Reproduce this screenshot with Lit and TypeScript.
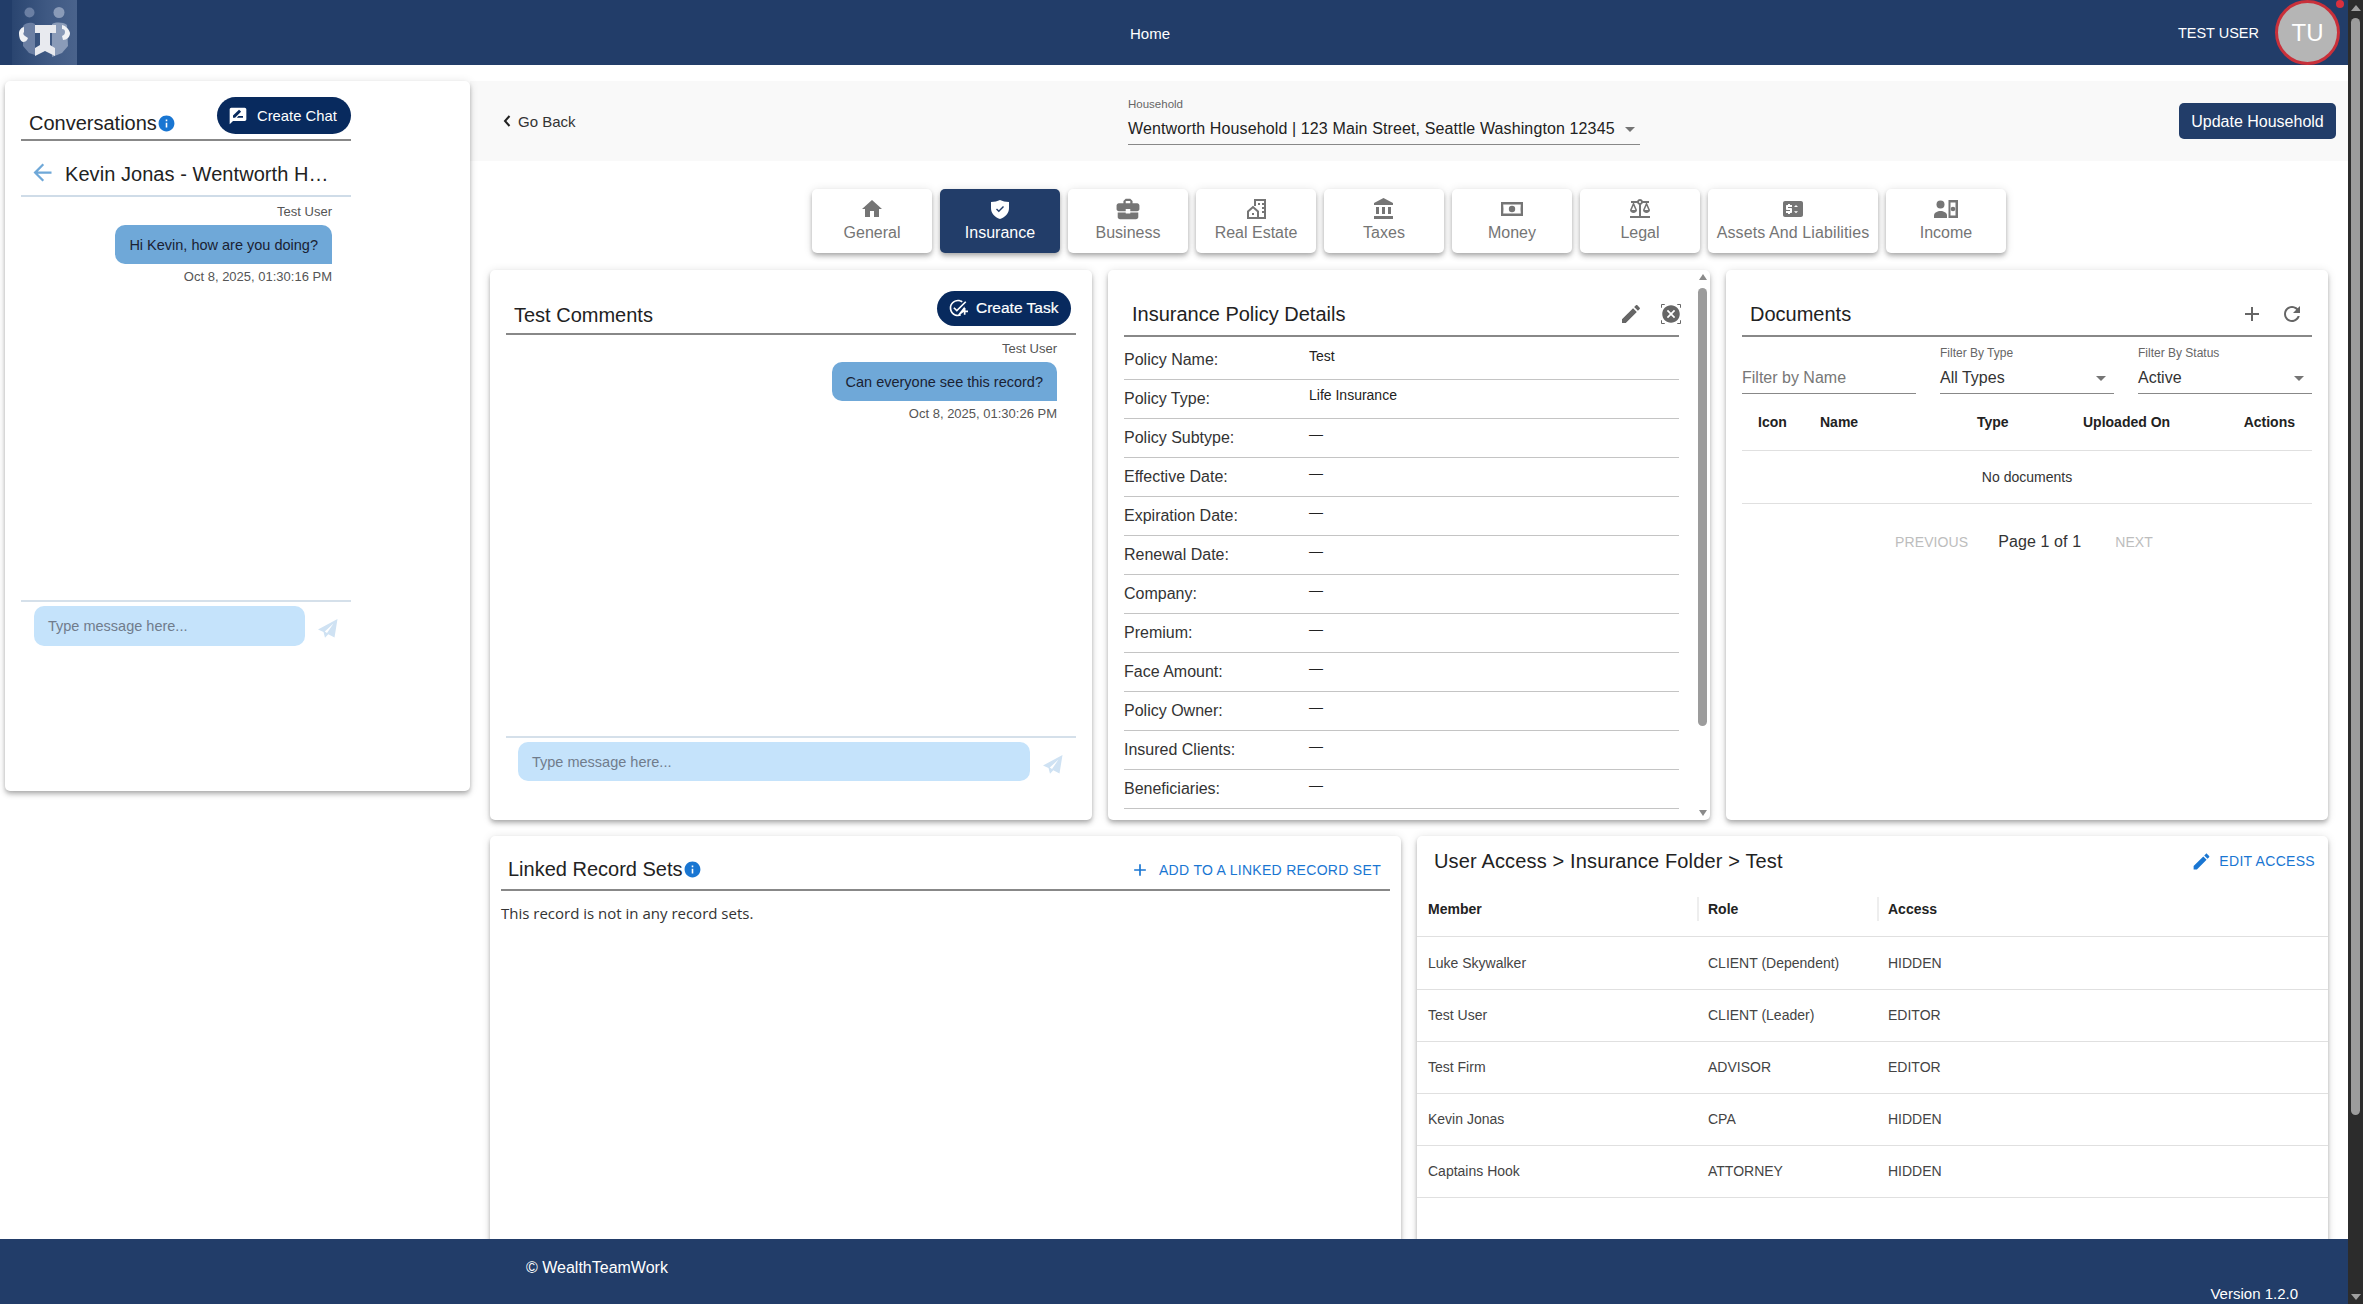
import { LitElement, html, css, svg } from "lit";
import { customElement } from "lit/decorators.js";

const P = {
  home: "M10 20v-6h4v6h5v-8h3L12 3 2 12h3v8z",
  shield: "M3 5c3.500 0 6.500-.7 9-2 2.500 1.300 5.500 2 9 2v6c0 5.500-3.500 9-9 11-5.500-2-9-5.500-9-11z",
  brief: "M10 16v-1H3.010L3 19c0 1.110.89 2 2 2h14c1.110 0 2-.89 2-2v-4h-7v1h-4zm10-9h-4.010V5l-2-2h-4l-2 2v2H4c-1.100 0-2 .9-2 2v3c0 1.110.89 2 2 2h6v-2h4v2h6c1.100 0 2-.9 2-2V9c0-1.100-.9-2-2-2zm-6 0h-4V5h4v2z",
  bank: "M4 10v7h3v-7H4zm6 0v7h3v-7h-3zM2 22h19v-3H2v3zm14-12v7h3v-7h-3zm-4.500-9L2 6v2h19V6l-9.500-5z",
  balance: "M13 7.830c.85-.3 1.530-.98 1.830-1.830H18l-3 7c0 1.660 1.570 3 3.500 3s3.500-1.340 3.500-3l-3-7h2V4h-6.170c-.41-1.170-1.520-2-2.830-2s-2.420.83-2.830 2H3v2h2l-3 7c0 1.660 1.570 3 3.500 3S9 14.660 9 13L6 6h3.170c.3.85.98 1.530 1.830 1.830V19H2v2h20v-2h-9V7.830zM20.370 13h-3.740l1.870-4.360L20.370 13zm-13 0H3.630l1.870-4.360L7.370 13zM12 6c-.55 0-1-.45-1-1s.45-1 1-1 1 .45 1 1-.45 1-1 1z",
  price: "M20 4H4c-1.110 0-1.990.89-1.990 2L2 18c0 1.110.89 2 2 2h16c1.110 0 2-.89 2-2V6c0-1.110-.89-2-2-2zm-9 6H7v1h3c.55 0 1 .45 1 1v3c0 .55-.45 1-1 1H9v1H7v-1H5v-2h4v-1H6c-.55 0-1-.45-1-1V9c0-.55.45-1 1-1h1V7h2v1h2v2zm4 6.250l-2-2h4l-2 2zM13 10l2-2 2 2h-4z",
  edit: "M3 17.250V21h3.750L17.810 9.940l-3.750-3.750L3 17.250zM20.710 7.040c.39-.39.39-1.020 0-1.410l-2.340-2.340c-.39-.39-1.020-.39-1.410 0l-1.830 1.830 3.750 3.750 1.830-1.830z",
  add: "M19 13h-6v6h-2v-6H5v-2h6V5h2v6h6v2z",
  refresh: "M17.650 6.350C16.200 4.900 14.210 4 12 4c-4.420 0-7.990 3.580-7.990 8s3.570 8 7.990 8c3.730 0 6.840-2.550 7.730-6h-2.080c-.82 2.330-3.040 4-5.650 4-3.310 0-6-2.690-6-6s2.690-6 6-6c1.660 0 3.140.69 4.220 1.780L13 11h7V4l-2.350 2.350z",
  back: "M20 11H7.830l5.590-5.590L12 4l-8 8 8 8 1.410-1.410L7.830 13H20v-2z",
  info: "M12 2C6.480 2 2 6.480 2 12s4.480 10 10 10 10-4.480 10-10S17.520 2 12 2zm1 15h-2v-6h2v6zm0-8h-2V7h2v2z",
  review: "M20 2H4c-1.100 0-2 .9-2 2v18l4-4h14c1.100 0 2-.9 2-2V4c0-1.100-.9-2-2-2zM6 14v-2.470l6.880-6.880c.2-.2.51-.2.71 0l1.770 1.770c.2.2.2.51 0 .71L8.470 14H6zm12 0h-7.500l2-2H18v2z",
  task: "M22 5.180L10.590 16.600l-4.240-4.240 1.410-1.410 2.830 2.830 10-10L22 5.180zm-2.210 5.040c.13.57.21 1.170.21 1.780 0 4.420-3.580 8-8 8s-8-3.580-8-8 3.580-8 8-8c1.580 0 3.040.46 4.280 1.250l1.440-1.440C16.100 2.670 14.130 2 12 2 6.480 2 2 6.480 2 12s4.480 10 10 10c1.170 0 2.300-.2 3.340-.57v-2.130c-1 .45-2.140.7-3.340.7zM19 15v-3h2v3h3v2h-3v3h-2v-3h-3v-2h3z",
  cancel: "M12 1.500C6.200 1.500 1.500 6.200 1.500 12S6.200 22.500 12 22.500 22.500 17.800 22.500 12 17.800 1.500 12 1.500zm5 14.090L15.590 17 12 13.410 8.410 17 7 15.590 10.590 12 7 8.410 8.410 7 12 10.590 15.590 7 17 8.410 13.410 12 17 15.590z",
};

const ico = (d: string, cls = "", box = "0 0 24 24") => html`<svg class="ic ${cls}" viewBox=${box}><path d=${d}></path></svg>`;

const realEstate = html`<svg class="ic" viewBox="0 0 24 24">
  <path fill="none" stroke="currentColor" stroke-width="2" d="M11 9V3h10v18h-7"></path>
  <path fill="none" stroke="currentColor" stroke-width="2" d="M4 21v-6.500L9 10l5 4.500V21z"></path>
  <path d="M14 6h2v2h-2zM18 6h2v2h-2zM18 10h2v2h-2zM18 14h2v2h-2zM8 16h2v2H8z"></path>
</svg>`;
const moneyIc = html`<svg class="ic" viewBox="0 0 24 24">
  <path fill-rule="evenodd" d="M1 5h22v14H1zM3.500 12c0 1.700-.3 2.900-.3 4.500h17.600c0-1.600-.3-2.800-.3-4.500s.3-2.900.3-4.500H3.200c0 1.600.3 2.800.3 4.500z"></path>
  <circle cx="12" cy="12" r="3.200"></circle>
</svg>`;
const incomeIc = html`<svg class="ic" viewBox="0 0 24 24">
  <circle cx="6.500" cy="7.500" r="4"></circle>
  <path d="M0 21v-2.500C0 15.500 3.500 14 6.500 14s6.500 1.500 6.500 4.500V21z"></path>
  <path fill-rule="evenodd" d="M14.500 3H24v18h-9.500zM16.500 5.500v13h5v-13z"></path>
  <circle cx="19" cy="12" r="2.300"></circle>
</svg>`;
const sendIc = html`<svg class="send" viewBox="0 0 20 20">
  <path d="M19.500 0L0 10.500l5.500 2.500 1.500 5.800 3.300-3.500 6.200 3.200zM6.800 12.500L15.500 4.500 9 14z"></path>
</svg>`;
const closeIc = html`<svg class="ic closeic" viewBox="0 0 24 24">
  <path d=${P.cancel}></path>
  <path fill="none" stroke="currentColor" stroke-width="1.200" d="M.6 4.500V.6h3.900M19.500.6h3.900v3.900M23.400 19.500v3.900h-3.900M4.500 23.400H.6v-3.900"></path>
</svg>`;
const logo = svg`
  <defs><linearGradient id="lg" x1="0" x2="1" y1="0" y2="0">
    <stop offset="0" stop-color="#2a4570"></stop><stop offset=".55" stop-color="#3f5983"></stop><stop offset="1" stop-color="#4a638c"></stop>
  </linearGradient></defs>
  <rect width="65" height="65" fill="url(#lg)"></rect>
  <circle cx="17.500" cy="12.500" r="5" fill="#6b7fa3"></circle>
  <circle cx="47" cy="12.500" r="5.500" fill="#8a9bb8"></circle>
  <path fill="#6b7fa3" d="M11 26c3-4 9-4 12-2v31l-6-2-6-7z"></path>
  <path fill="#8a9bb8" d="M40 24c4-2 11-2 15 1l1 21-6 7-10 4z"></path>
  <path fill="#f0f2f5" d="M7 33c0-3 3-6 5-6v5c-1 1-1 3 1 4l3 2c-1 3-3 4-5 4-3-1-4-5-4-9zM50 25c4 1 7 4 8 8 0 4-3 7-7 7l-1-4c2-1 3-2 3-4s-1-3-3-3z"></path>
  <path fill="#e8eaef" d="M23 25h21v8h-6v12l5 3v8l-10-5-10 5v-8l5-3V33h-5z"></path>`;

const TABS: [string, unknown][] = [
  ["General", ico(P.home)],
  ["Insurance", html`<svg class="ic" viewBox="0 0 24 24"><path d=${P.shield}></path><path fill="#223d69" d="M10.800 15.200l-2.800-2.800 1-1 1.800 1.800 4.200-4.200 1 1z"></path></svg>`],
  ["Business", ico(P.brief, "", "1.500 2 21 20")],
  ["Real Estate", realEstate],
  ["Taxes", ico(P.bank)],
  ["Money", moneyIc],
  ["Legal", ico(P.balance)],
  ["Assets And Liabilities", ico(P.price)],
  ["Income", incomeIc],
];
const POLICY: [string, string][] = [
  ["Policy Name:", "Test"], ["Policy Type:", "Life Insurance"], ["Policy Subtype:", "—"],
  ["Effective Date:", "—"], ["Expiration Date:", "—"], ["Renewal Date:", "—"],
  ["Company:", "—"], ["Premium:", "—"], ["Face Amount:", "—"], ["Policy Owner:", "—"],
  ["Insured Clients:", "—"], ["Beneficiaries:", "—"],
];
const ACCESS = [
  ["Luke Skywalker", "CLIENT (Dependent)", "HIDDEN"],
  ["Test User", "CLIENT (Leader)", "EDITOR"],
  ["Test Firm", "ADVISOR", "EDITOR"],
  ["Kevin Jonas", "CPA", "HIDDEN"],
  ["Captains Hook", "ATTORNEY", "HIDDEN"],
];

@customElement("app-root")
export class AppRoot extends LitElement {
  static styles = css`
    :host { display: flex; width: 100vw; height: 100vh; overflow: hidden; background: #fff; color: #222;
      font-family: "Liberation Sans", Arial, sans-serif; font-size: 14px; }
    * { box-sizing: border-box; }
    .ic { width: 24px; height: 24px; fill: currentColor; display: block; flex: none; }
    .page { flex: 1; min-width: 0; display: flex; flex-direction: column; height: 100%; }
    .top { height: 65px; flex: none; background: #223d69; color: #fff; display: flex; align-items: center; padding: 0 8px 0 12px; }
    .logo { width: 65px; height: 65px; display: block; flex: none; }
    .home { margin: 2px 0 0 1053px; font-size: 15px; }
    .user { margin-left: auto; font-size: 14.500px; margin-right: 16px; }
    .avatar { position: relative; width: 65px; height: 65px; border-radius: 50%; border: 3px solid #c9303a; background: #b5b5b5;
      display: flex; align-items: center; justify-content: center; font-size: 24px; }
    .dot { position: absolute; top: -3px; right: -7px; width: 8px; height: 8px; border-radius: 50%; background: #d9303e; }
    .body { flex: 1; min-height: 0; overflow: hidden; display: flex; }
    aside { width: 470px; flex: none; padding: 16px 0 0 5px; position: relative; z-index: 1; }
    .card { background: #fff; border-radius: 5px; box-shadow: 0 2px 4px -1px rgba(0,0,0,.2), 0 4px 5px rgba(0,0,0,.14), 0 1px 10px rgba(0,0,0,.12); }
    .side { height: 710px; display: flex; flex-direction: column; }
    .title { font-size: 20px; line-height: 24px; color: #222; white-space: nowrap; }
    .chead { display: flex; align-items: flex-end; border-bottom: 2px solid #888; flex: none; }
    .side .chead { width: 330px; margin-left: 16px; height: 60px; padding: 0 0 4px 8px; }
    .pill { margin-left: auto; display: flex; align-items: center; background: #082a5e; color: #fff; border-radius: 19px; white-space: nowrap; }
    .pill .ic { width: 20px; height: 20px; }
    .chat-btn { height: 37px; width: 134px; margin-bottom: 1px; padding-left: 11px; gap: 9px; font-size: 14.800px; }
    .info { width: 19px; height: 19px; color: #1976d2; margin-bottom: 2px; }
    .convo { width: 330px; margin-left: 16px; height: 56px; flex: none; display: flex; align-items: center; border-bottom: 2px solid #cfdce8; padding: 12px 0 0 8px; }
    .convo .ic { width: 27px; height: 27px; color: #6fa8d8; margin-top: -3px; }
    .convo .title { margin-left: 9px; letter-spacing: .06px; }
    .msgs { display: flex; flex-direction: column; align-items: flex-end; flex: 1; min-height: 0; }
    .side .msgs { width: 330px; margin-left: 16px; padding: 7px 19px 0 0; }
    .who, .when { font-size: 13px; line-height: 16px; color: #555; }
    .bubble { margin: 5px 0 5px; height: 39px; padding: 0 14px; display: flex; align-items: center; background: #6fa8d8; color: #1a2233;
      font-size: 14.500px; border-radius: 10px 10px 0 10px; }
    .composer { flex: none; border-top: 2px solid #d5e0ea; display: flex; align-items: center; }
    .field { height: 40px; background: #c5e3fb; border-radius: 10px; font-size: 14.500px; color: #707c8c; display: flex; align-items: center; padding-left: 14px; }
    .send { width: 20px; height: 20px; fill: #cfe2f3; flex: none; margin-left: 13px; margin-top: 6px; }
    .side .composer { width: 330px; margin-left: 16px; padding: 4px 0 0 13px; margin-bottom: 145px; }
    .side .field { width: 271px; }
    main { flex: 1; min-width: 0; }
    .hbar { margin-top: 16px; height: 80px; background: #f9f9f9; display: flex; align-items: center; padding: 0 12px 0 33px; }
    .backlink { width: 625px; display: flex; align-items: center; gap: 7px; font-size: 15px; color: #333; }
    .chev { width: 8px; height: 12px; fill: none; stroke: #222; stroke-width: 2; }
    .hsel { width: 512px; }
    .hlabel { font-size: 11.500px; line-height: 14px; color: #666; }
    .hval { display: flex; align-items: center; gap: 10px; margin-top: 6px; padding-bottom: 3px; border-bottom: 1.500px solid #888; font-size: 16px; letter-spacing: .12px; line-height: 24px; color: #222; white-space: nowrap; height: 28px; }
    .caret { width: 0; height: 0; border-left: 5px solid transparent; border-right: 5px solid transparent; border-top: 5px solid #757575; flex: none; }
    .update { margin-left: auto; height: 36px; width: 157px; padding-top: 2px; background: #223d69; color: #fff; border-radius: 5px; display: flex; align-items: center; justify-content: center; font-size: 16px; }
    .tabs { display: flex; justify-content: center; gap: 8px; padding-top: 28px; }
    .tab { width: 120px; height: 64px; background: #fff; color: #757575; border-radius: 5px; display: flex; flex-direction: column; align-items: center; padding-top: 8px;
      font-size: 16px; line-height: 20px; white-space: nowrap; box-shadow: 0 2px 4px -1px rgba(0,0,0,.2), 0 4px 5px rgba(0,0,0,.14), 0 1px 10px rgba(0,0,0,.12); }
    .tab span { margin-top: 2px; }
    .tab.wide { width: 170px; letter-spacing: .1px; }
    .tab.on { background: #223d69; color: #fff; }
    .row1 { display: grid; grid-template-columns: repeat(3, 1fr); gap: 16px; padding: 17px 20px 0; }
    .row1 > .card { height: 550px; position: relative; display: flex; flex-direction: column; overflow: hidden; }
    .comments .chead { height: 65px; margin: 0 16px; padding: 0 0 6px 8px; }
    .task-btn { height: 35px; width: 134px; margin: 0 5px 1px auto; padding: 0 0 2px 11px; gap: 8px; font-size: 15.500px; font-weight: 500; -webkit-text-stroke: .2px #fff; }
    .comments .msgs { padding: 6px 35px 0 0; }
    .comments .composer { margin: 0 16px 39px; padding: 4px 0 0 12px; }
    .comments .field { width: 512px; height: 39px; }
    .dhead { height: 67px; margin: 0 16px; padding: 0 0 9px 8px; display: flex; align-items: flex-end; border-bottom: 2px solid #888; flex: none; }
    .acts { margin-left: auto; display: flex; gap: 16px; align-items: center; color: #666; }
    .policy .dhead { margin-right: 31px; }
    .policy .acts { margin-right: -2px; gap: 18px; }
    .closeic { width: 20px; height: 20px; }
    .plist { margin: 0 31px 0 16px; padding-top: 4px; }
    .prow { height: 39px; display: grid; grid-template-columns: 185px 1fr; align-items: center; border-bottom: 1px solid #c4c4c4; font-size: 16px; color: #333; }
    .prow b { font-weight: 400; font-size: 14px; color: #222; margin-bottom: 8px; }
    .minibar { position: absolute; top: 4px; bottom: 4px; right: 3px; width: 9px; display: flex; flex-direction: column; align-items: center; }
    .ua, .da { width: 0; height: 0; border-left: 4px solid transparent; border-right: 4px solid transparent; }
    .ua { border-bottom: 6px solid #8a8a8a; }
    .da { border-top: 6px solid #8a8a8a; margin-top: auto; }
    .thumb { width: 9px; height: 438px; margin-top: 8px; border-radius: 5px; background: #9c9c9c; }
    .docs .dhead { padding-right: 8px; }
    .filters { display: grid; grid-template-columns: repeat(3, 1fr); gap: 24px; margin: 0 16px; padding-top: 9px; }
    .flabel { font-size: 12px; line-height: 14px; height: 14px; color: #666; }
    .fval { margin-top: 5px; height: 29px; padding: 1px 8px 3px 0; border-bottom: 1px solid #888; display: flex; align-items: center; justify-content: space-between; font-size: 16px; color: #333; }
    .fval.ph { color: #777; }
    .thead, .tnone { margin: 0 16px; border-bottom: 1px solid #e0e0e0; }
    .thead { height: 57px; display: grid; grid-template-columns: 62px 157px 106px auto 1fr; align-items: center; padding: 0 17px 0 16px; font-weight: 700; font-size: 14px; color: #222; }
    .thead span:last-child { justify-self: end; }
    .tnone { height: 53px; display: flex; align-items: center; justify-content: center; color: #333; }
    .pager { display: flex; justify-content: center; align-items: center; padding: 26px 6px 0 0; gap: 30px; font-size: 14px; letter-spacing: .1px; color: #bdbdbd; line-height: 24px; }
    .pager b { font-weight: 400; font-size: 16px; color: #333; margin-right: 4px; }
    .row2 { display: grid; grid-template-columns: 1fr 1fr; gap: 16px; padding: 16px 20px 0; }
    .row2 > .card { height: 500px; }
    .lhead { height: 55px; margin: 0 11px; padding: 0 0 8px 7px; display: flex; align-items: flex-end; border-bottom: 2px solid #888; }
    .link { margin-left: auto; display: flex; align-items: center; color: #1976d2; font-size: 14px; white-space: nowrap; letter-spacing: .300px; }
    .lhead .link { gap: 9px; padding-right: 9px; margin-bottom: 1px; }
    .lhead .link .ic { width: 20px; height: 20px; }
    .lmsg { padding: 12px 11px; font-family: "Open Sans", "Liberation Sans", sans-serif; font-size: 15px; line-height: 20px; color: #333; }
    .ahead { height: 45px; padding: 5px 13px 0 17px; display: flex; align-items: center; }
    .ahead .title { letter-spacing: .15px; }
    .ahead .link { gap: 7px; }
    .ahead .link .ic { width: 21px; height: 21px; }
    .agrid { display: grid; grid-template-columns: 271px 180px 130px 1fr; align-items: center; padding-left: 11px; }
    .agrid.h { height: 56px; border-bottom: 1px solid #e0e0e0; font-weight: 700; }
    .agrid.h span { height: 24px; display: flex; align-items: center; border-right: 2px solid #eee; }
    .agrid.h span:last-child { border: 0; }
    .agrid span + span { padding-left: 9px; }
    .arows { padding-top: 1px; }
    .agrid.r { height: 52px; padding-bottom: 1px; border-bottom: 1px solid #e0e0e0; color: #444; }
    footer { height: 65px; flex: none; background: #223d69; color: #fff; display: flex; font-size: 15px; line-height: 18px; position: relative; z-index: 2; }
    footer .copy { margin: 20px 0 0 526px; font-size: 16px; }
    footer .ver { margin: 46px 50px 0 auto; }
    .vbar { width: 15px; flex: none; background: #2c2c2c; display: flex; flex-direction: column; align-items: center; padding: 5px 0 4px; position: relative; z-index: 3; }
    .vbar .ua { border-left-width: 5px; border-right-width: 5px; border-bottom: 6px solid #a0a0a0; }
    .vbar .da { border-left-width: 5px; border-right-width: 5px; border-top: 6px solid #a0a0a0; }
    .vbar .thumb { height: 1097px; margin-top: 7px; }
  `;

  render() {
    return html`
      <div class="page">
        <header class="top">
          <svg class="logo" viewBox="0 0 65 65">${logo}</svg>
          <div class="home">Home</div>
          <div class="user">TEST USER</div>
          <div class="avatar">TU<i class="dot"></i></div>
        </header>
        <div class="body">
          <aside>
            <section class="card side">
              <div class="chead">
                <span class="title">Conversations</span>${ico(P.info, "info")}
                <div class="pill chat-btn">${ico(P.review)}Create Chat</div>
              </div>
              <div class="convo">${ico(P.back)}<span class="title">Kevin Jonas - Wentworth H…</span></div>
              <div class="msgs">
                <div class="who">Test User</div>
                <div class="bubble">Hi Kevin, how are you doing?</div>
                <div class="when">Oct 8, 2025, 01:30:16 PM</div>
              </div>
              <div class="composer"><div class="field">Type message here...</div>${sendIc}</div>
            </section>
          </aside>
          <main>
            <div class="hbar">
              <div class="backlink"><svg class="chev" viewBox="0 0 8 12"><path d="M6.500 1L2 6l4.500 5"></path></svg>Go Back</div>
              <div class="hsel">
                <div class="hlabel">Household</div>
                <div class="hval">Wentworth Household | 123 Main Street, Seattle Washington 12345<i class="caret"></i></div>
              </div>
              <div class="update">Update Household</div>
            </div>
            <nav class="tabs">
              ${TABS.map(([t, i]) => html`<div class="tab ${t === "Insurance" ? "on" : ""} ${t.length > 12 ? "wide" : ""}">${i}<span>${t}</span></div>`)}
            </nav>
            <div class="row1">
              <section class="card comments">
                <div class="chead">
                  <span class="title">Test Comments</span>
                  <div class="pill task-btn">${ico(P.task)}Create Task</div>
                </div>
                <div class="msgs">
                  <div class="who">Test User</div>
                  <div class="bubble">Can everyone see this record?</div>
                  <div class="when">Oct 8, 2025, 01:30:26 PM</div>
                </div>
                <div class="composer"><div class="field">Type message here...</div>${sendIc}</div>
              </section>
              <section class="card policy">
                <div class="dhead">
                  <span class="title">Insurance Policy Details</span>
                  <div class="acts">${ico(P.edit)}${closeIc}</div>
                </div>
                <div class="plist">
                  ${POLICY.map(([k, v]) => html`<div class="prow"><span>${k}</span><b>${v}</b></div>`)}
                </div>
                <div class="minibar"><i class="ua"></i><i class="thumb"></i><i class="da"></i></div>
              </section>
              <section class="card docs">
                <div class="dhead">
                  <span class="title">Documents</span>
                  <div class="acts">${ico(P.add)}${ico(P.refresh)}</div>
                </div>
                <div class="filters">
                  <div><div class="flabel"></div><div class="fval ph">Filter by Name</div></div>
                  <div><div class="flabel">Filter By Type</div><div class="fval">All Types<i class="caret"></i></div></div>
                  <div><div class="flabel">Filter By Status</div><div class="fval">Active<i class="caret"></i></div></div>
                </div>
                <div class="thead"><span>Icon</span><span>Name</span><span>Type</span><span>Uploaded On</span><span>Actions</span></div>
                <div class="tnone">No documents</div>
                <div class="pager"><span>PREVIOUS</span><b>Page 1 of 1</b><span>NEXT</span></div>
              </section>
            </div>
            <div class="row2">
              <section class="card">
                <div class="lhead">
                  <span class="title">Linked Record Sets</span>${ico(P.info, "info")}
                  <div class="link">${ico(P.add)}ADD TO A LINKED RECORD SET</div>
                </div>
                <div class="lmsg">This record is not in any record sets.</div>
              </section>
              <section class="card">
                <div class="ahead">
                  <span class="title">User Access &gt; Insurance Folder &gt; Test</span>
                  <div class="link">${ico(P.edit)}EDIT ACCESS</div>
                </div>
                <div class="agrid h"><span>Member</span><span>Role</span><span>Access</span></div>
                <div class="arows">
                  ${ACCESS.map((r) => html`<div class="agrid r">${r.map((c) => html`<span>${c}</span>`)}</div>`)}
                </div>
              </section>
            </div>
          </main>
        </div>
        <footer><span class="copy">© WealthTeamWork</span><span class="ver">Version 1.2.0</span></footer>
      </div>
      <div class="vbar"><i class="ua"></i><i class="thumb"></i><i class="da"></i></div>
    `;
  }
}
